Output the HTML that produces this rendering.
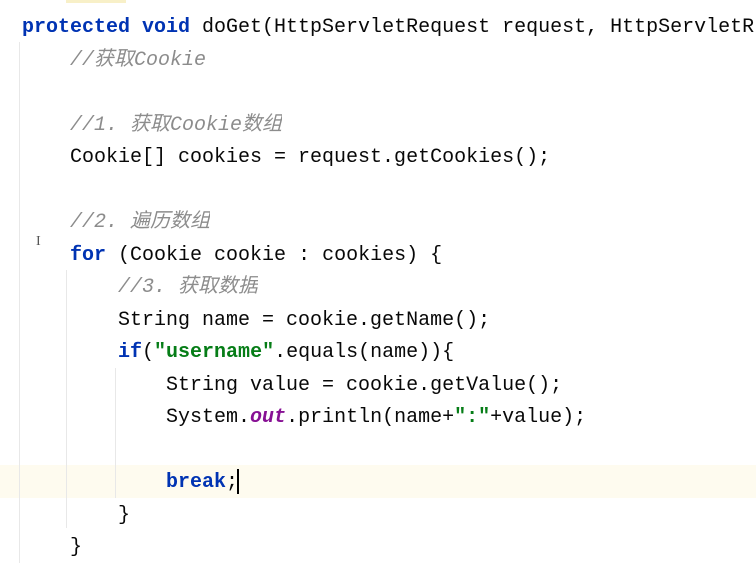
<!DOCTYPE html>
<html><head><meta charset="utf-8"><style>
body{margin:0;width:756px;height:563px;background:#fff;overflow:hidden;position:relative;font-family:"Liberation Mono","Noto Sans CJK SC",monospace;font-size:20px;color:#080808}
.l{position:absolute;left:22px;white-space:pre;line-height:32.5px;height:32.5px;overflow:hidden;max-width:734px}
.k{color:#0033b3;font-weight:bold}
.c{color:#8c8c8c;font-style:italic}
.s{color:#067d17;font-weight:bold}
.o{color:#871094;font-style:italic;font-weight:bold}
.g{position:absolute;width:1px;background:#e8e8e8}
</style></head><body>
<div style="position:absolute;left:0;top:465px;width:756px;height:33px;background:#fefbef"></div>
<div style="position:absolute;left:66px;top:0;width:60px;height:3px;background:#f8f0c8"></div>
<div class="g" style="left:19px;top:42px;height:521px"></div>
<div class="g" style="left:66px;top:270px;height:258px"></div>
<div class="g" style="left:115px;top:368px;height:130px"></div>
<div class="l" style="top:12px"><span class="k">protected void</span> doGet(HttpServletRequest request, HttpServletR</div>
<div class="l c" style="top:44.5px">    //获取Cookie</div>
<div class="l c" style="top:109.5px">    //1. 获取Cookie数组</div>
<div class="l" style="top:142px">    Cookie[] cookies = request.getCookies();</div>
<div class="l c" style="top:207px">    //2. 遍历数组</div>
<div class="l" style="top:239.5px">    <span class="k">for</span> (Cookie cookie : cookies) {</div>
<div class="l c" style="top:272px">        //3. 获取数据</div>
<div class="l" style="top:304.5px">        String name = cookie.getName();</div>
<div class="l" style="top:337px">        <span class="k">if</span>(<span class="s">"username"</span>.equals(name)){</div>
<div class="l" style="top:369.5px">            String value = cookie.getValue();</div>
<div class="l" style="top:402px">            System.<span class="o">out</span>.println(name+<span class="s">":"</span>+value);</div>
<div class="l" style="top:467px">            <span class="k">break</span>;</div>
<div style="position:absolute;left:237px;top:469px;width:2px;height:25px;background:#000"></div>
<div class="l" style="top:499.5px">        }</div>
<div class="l" style="top:532px">    }</div>
<div style="position:absolute;left:36px;top:234px;font-size:14px;color:#555;font-family:'Liberation Serif',serif">I</div>
</body></html>
